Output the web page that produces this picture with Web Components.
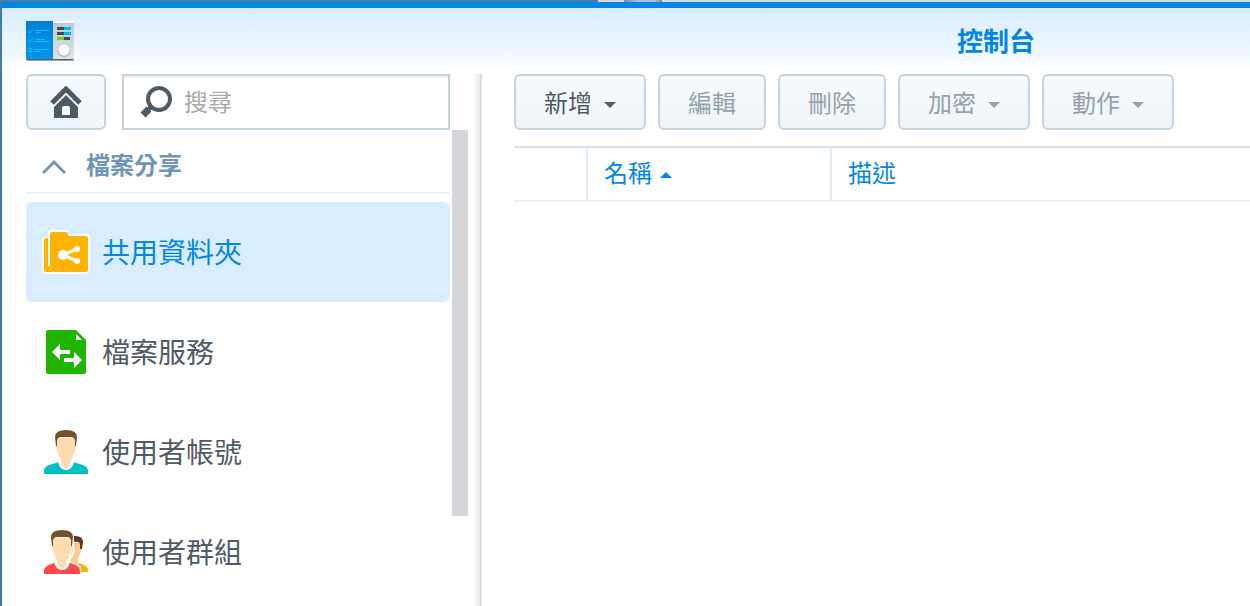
<!DOCTYPE html>
<html lang="zh-Hant">
<head>
<meta charset="utf-8">
<meta name="viewport" content="width=device-width, initial-scale=1">
<title>控制台</title>
<style>
  html, body { margin: 0; height: 100%; overflow: hidden; }
  body {
    font-family: "Noto Sans CJK TC", "Noto Sans", sans-serif;
    font-size: 24px;
    line-height: 36px;
    color: #505a64;
    --accent: #0086e5;
    --line: #c6d1de;
    --slate: #505a64;
  }
</style>
</head>
<body>
<cp-desktop>
  <cp-window>
    <cp-titlebar slot="title">控制台</cp-titlebar>
    <cp-sidebar slot="side">
      <cp-group label="檔案分享">
        <cp-nav-item icon="folder" selected>共用資料夾</cp-nav-item>
        <cp-nav-item icon="service">檔案服務</cp-nav-item>
        <cp-nav-item icon="user">使用者帳號</cp-nav-item>
        <cp-nav-item icon="group">使用者群組</cp-nav-item>
      </cp-group>
    </cp-sidebar>
    <cp-toolbar>
      <cp-button menu>新增</cp-button>
      <cp-button disabled>編輯</cp-button>
      <cp-button disabled>刪除</cp-button>
      <cp-button menu disabled>加密</cp-button>
      <cp-button menu disabled>動作</cp-button>
    </cp-toolbar>
    <cp-folder-table></cp-folder-table>
  </cp-window>
</cp-desktop>

<script>
const define = (name, render) => customElements.define(name, class extends HTMLElement {
  connectedCallback() {
    if (this.shadowRoot) return;
    this.attachShadow({ mode: 'open' }).innerHTML = render(this);
  }
});

const ICONS = {
  folder: `
    <path d="M3 8H6V5Q6 1 10 1H23Q26 1 27 5H44Q48 5 48 9V40Q48 45 44 45H4Q0 45 0 41V11Q0 8 3 8Z" fill="#fff"/>
    <path d="M2 11Q2 9 4 9H6V37H8V5Q8 3 10 3H24Q26 3 26 5V7H44Q46 7 46 9V41Q46 43 44 43H4Q2 43 2 41Z" fill="#ffb200"/>
    <path d="M35 20L21 26L35 32" fill="none" stroke="#fff" stroke-width="3"/>
    <circle cx="21" cy="26" r="5" fill="#fff"/><circle cx="35" cy="20" r="3" fill="#fff"/><circle cx="35" cy="32" r="3" fill="#fff"/>`,
  service: `
    <path d="M6 1H34L44 11V43Q44 45 42 45H6Q4 45 4 43V3Q4 1 6 1Z" fill="#1fb400"/>
    <path d="M34 5V11H40Z" fill="#fff"/>
    <path d="M10 23L18 15V21H28V25H18V31ZM40 31L32 23V29H22V33H32V39Z" fill="#fff"/>`,
  user: `
    <path d="M2 45V42Q2 38 7 36L17 33H31L41 36Q46 38 46 42V45Z" fill="#00c0c0"/>
    <path d="M16 33L18 30H30L32 33Q30 41 24 41Q18 41 16 33Z" fill="#fff"/>
    <path d="M15 9H33V15Q35 16 34 19L32 24Q31 28 29 31Q29 36 24 40Q19 36 19 31Q17 28 16 24L14 19Q13 16 15 15Z" fill="#ffdcb0"/>
    <path d="M14 17L13 8Q13 1 24 1Q35 1 35 8L34 17H33V11Q32 8 29 8H19Q16 8 15 11V17Z" fill="#75502c"/>`,
  group: `
    <path d="M31 14H39V20Q40 21 38 24Q37 28 36 29V34L42 37Q46 38 46 41V43H38L28 32Z" fill="#ffc88a"/>
    <path d="M37 34L42 36Q46 38 46 43H38L36 37Z" fill="#ffb200"/>
    <path d="M31 7Q41 6 41 13L40 20H38V15Q37 12 31 13Z" fill="#5c3c1c"/>
    <path d="M31 7V17Q33 20 30 27L26 33L38 38V45" fill="none" stroke="#fff" stroke-width="2"/>
    <path d="M2 45V42Q2 38 7 36L14 33H26L34 36Q38 38 38 42V45Z" fill="#ff4b4b"/>
    <path d="M12 33L14 30H26L28 33Q26 41 20 41Q14 41 12 33Z" fill="#fff"/>
    <path d="M11 9H29V15Q31 16 30 19L28 24Q27 28 25 31Q25 36 20 40Q15 36 15 31Q13 28 12 24L10 19Q9 16 11 15Z" fill="#ffdcb0"/>
    <path d="M10 17L9 8Q9 1 20 1Q31 1 31 8L30 17H29V11Q28 8 25 8H15Q12 8 11 11V17Z" fill="#75502c"/>`
};

define('cp-desktop', () => `
  <style>
    :host {
      display: block; box-sizing: border-box; height: 100vh; padding: 2px 0 0 2px; overflow: hidden;
      background:
        linear-gradient(90deg, #477eac 0 598px, #d7dade 598px 624px, #6f8da5 624px, #a8c4dc 638px, #a8c4dc 654px, #7790a4 662px, #d2d8df 662px) top / 100% 2px no-repeat,
        #447aab;
    }
  </style>
  <slot></slot>`);

define('cp-window', () => `
  <style>
    :host {
      display: flex; flex-direction: column; box-sizing: border-box; min-height: 100%;
      border-top: 6px solid var(--accent);
      background: linear-gradient(#d8ebfa, #f2f8ff 48px, #fff 64px) #fff;
    }
    .body { flex: 1; display: flex; }
    main { flex: 1; min-width: 0; padding-left: 32px; }
  </style>
  <slot name="title"></slot>
  <div class="body">
    <slot name="side"></slot>
    <main><slot></slot></main>
  </div>`);

define('cp-titlebar', () => `
  <style>
    :host { display: block; }
    header { display: flex; align-items: center; justify-content: space-between; height: 66px; padding: 0 215px 0 24px; }
    h1 { margin: 0; padding-bottom: 2px; font-size: 26px; line-height: 40px; font-weight: 700; color: var(--accent); }
    svg { display: block; }
  </style>
  <header>
    <svg width="48" height="42" viewBox="0 0 48 42" aria-hidden="true">
      <defs>
        <linearGradient id="g" x2="0" y2="1"><stop stop-color="#bdc9d2"/><stop offset="1" stop-color="#dfe3e6"/></linearGradient>
        <linearGradient id="b" x2="0" y2="1"><stop stop-color="#0080d6"/><stop offset="1" stop-color="#0096ec"/></linearGradient>
      </defs>
      <rect y="4" width="48" height="37" rx="1" fill="#9aa3aa"/>
      <rect x="1" y="38" width="46" height="2" fill="#53606a"/>
      <rect x="27" y="1" width="21" height="38" fill="url(#g)"/>
      <rect x="27" y="1" width="21" height="2" fill="#f7f9fa"/>
      <rect y="1" width="27" height="38" fill="url(#b)"/>
      <g fill="none" stroke="#00c3ff">
        <path d="M2 11L4 13L7 9M2 20L4 22L7 18"/>
        <path d="M9 10.500H23M9 12.500H15M9 19.500H19M9 21.500H23M9 29.500H23M9 31.500H15"/>
        <path d="M2.500 28.500H5.500V31.500H2.500Z"/>
      </g>
      <path d="M31 7H38V10H31ZM31 12H38V15H31ZM37 17H44V20H37Z" fill="#404a53"/>
      <path d="M38 7H45V10H38ZM38 12H45V15H38Z" fill="#00b8f5"/>
      <rect x="31" y="17" width="7" height="3" fill="#74d600"/>
      <circle cx="38" cy="31" r="6" fill="#adb8c0"/>
      <circle cx="38" cy="30" r="7" fill="none" stroke="#b4bec6" stroke-dasharray="1 3"/>
      <circle cx="38" cy="30" r="5.500" fill="#f7fbfd"/>
    </svg>
    <h1><slot></slot></h1>
  </header>`);

define('cp-sidebar', () => `
  <style>
    :host {
      display: block; flex: none; box-sizing: border-box; width: 480px; padding: 0 12px 0 24px;
      border-right: 2px solid #dcdcdc;
      background: linear-gradient(90deg, #fff0, #e9e9e9) right / 8px 100% no-repeat;
    }
    .tools { display: flex; gap: 16px; height: 56px; margin-right: 18px; }
    button {
      display: grid; place-items: center; flex: none; width: 80px; padding: 0;
      border: 2px solid var(--line); border-radius: 6px;
      background: linear-gradient(#f5faff, #eff4f9);
    }
    label {
      flex: 1; min-width: 0; display: flex; align-items: center; gap: 12px; padding: 0 16px;
      border: 2px solid var(--line); background: linear-gradient(#f0f0f0 2px, #fff 2px);
    }
    input {
      flex: 1; min-width: 0; padding: 0 0 2px; border: 0; outline: 0; background: none;
      font: inherit; color: var(--slate);
    }
    input::placeholder { color: #aaa; opacity: 1; }
    svg { display: block; flex: none; }
    .scroll { display: flex; gap: 2px; }
    nav { flex: 1; min-width: 0; }
    .thumb { width: 16px; height: 386px; background: #d4d6d9; }
  </style>
  <div class="tools">
    <button type="button" aria-label="首頁">
      <svg width="32" height="32" viewBox="0 0 32 32" fill="#505a64">
        <path d="M4 18L16 8L28 18V32H4Z"/>
        <path d="M12 29V22Q12 20 14 20H18Q20 20 20 22V29Z" fill="#f2f7fc"/>
        <path d="M2 21L16 7L30 21" fill="none" stroke="#f3f8fc" stroke-width="3"/>
        <path d="M2 17L16 3L30 17" fill="none" stroke="#505a64" stroke-width="5"/>
      </svg>
    </button>
    <label>
      <svg width="32" height="32" viewBox="0 0 32 32" fill="none" stroke="#505a64">
        <circle cx="19" cy="13" r="11" stroke-width="4"/>
        <path d="M11 21L8 24" stroke-width="4"/>
        <path d="M9 23L3 29" stroke-width="7"/>
      </svg>
      <input type="text" placeholder="搜尋" aria-label="搜尋">
    </label>
  </div>
  <div class="scroll">
    <nav><slot></slot></nav>
    <div class="thumb"></div>
  </div>`);

define('cp-group', el => `
  <style>
    :host { display: block; }
    h2 {
      display: flex; align-items: center; gap: 20px; box-sizing: border-box; height: 64px;
      margin: 0 0 8px; padding: 6px 0 0 16px; border-bottom: 2px solid #ebf0f5;
      font-size: 24px; font-weight: 700; color: #6e96b4;
    }
    svg { flex: none; margin-top: 6px; }
  </style>
  <h2>
    <svg width="24" height="16" viewBox="0 0 24 16" aria-hidden="true"><path d="M1 14L12 3L23 14" fill="none" stroke="#6e96b4" stroke-width="3"/></svg>
    <span>${el.getAttribute('label')}</span>
  </h2>
  <slot></slot>`);

define('cp-nav-item', el => `
  <style>
    :host { display: block; }
    a {
      display: flex; align-items: center; gap: 12px; height: 100px; padding-left: 16px; border-radius: 6px;
      font-size: 28px; line-height: 40px; color: var(--slate); text-decoration: none;
    }
    :host([selected]) a { background: #d9edff; color: var(--accent); }
    svg { flex: none; }
    span { padding-bottom: 2px; }
  </style>
  <a href="#${el.getAttribute('icon')}"${el.hasAttribute('selected') ? ' aria-current="page"' : ''}>
    <svg width="48" height="46" viewBox="0 0 48 46" aria-hidden="true">${ICONS[el.getAttribute('icon')]}</svg>
    <span><slot></slot></span>
  </a>`);

define('cp-toolbar', () => `
  <style>:host { display: flex; gap: 12px; margin-bottom: 16px; }</style>
  <slot></slot>`);

define('cp-button', el => `
  <style>
    :host { display: block; flex: none; }
    button {
      display: flex; align-items: center; gap: 12px; height: 56px; padding: 0 28px;
      border: 2px solid var(--line); border-radius: 6px;
      background: linear-gradient(#f5faff, #eff4f9);
      font: inherit; color: var(--slate);
    }
    button:disabled { color: #96a0aa; }
    svg { display: block; margin-top: 6px; }
  </style>
  <button type="button"${el.hasAttribute('disabled') ? ' disabled' : ''}${el.hasAttribute('menu') ? ' aria-haspopup="menu"' : ''}>
    <span><slot></slot></span>
    ${el.hasAttribute('menu') ? '<svg width="12" height="6" viewBox="0 0 12 6" aria-hidden="true"><path d="M0 0H12L6 6Z" fill="currentColor"/></svg>' : ''}
  </button>`);

define('cp-folder-table', () => `
  <style>
    :host { display: block; }
    table { width: 100%; table-layout: fixed; border-collapse: separate; border-spacing: 0; }
    th {
      box-sizing: border-box; height: 56px; padding: 0 16px 4px; text-align: left; font-weight: 400; color: var(--accent);
      border-top: 2px solid #d7e1eb; border-bottom: 2px solid #ebf0f5;
    }
    th:not(:last-child) { border-right: 2px solid #e1ebf5; }
    .check { width: 74px; }
    .name { width: 244px; }
    .sort { display: flex; align-items: center; gap: 8px; }
    svg { display: block; margin-top: 6px; }
  </style>
  <table>
    <thead><tr>
      <th class="check" scope="col"></th>
      <th class="name" scope="col" aria-sort="ascending"><div class="sort">名稱<svg width="12" height="6" viewBox="0 0 12 6" aria-hidden="true"><path d="M0 6H12L6 0Z" fill="currentColor"/></svg></div></th>
      <th scope="col">描述</th>
    </tr></thead>
    <tbody></tbody>
  </table>`);
</script>
</body>
</html>
